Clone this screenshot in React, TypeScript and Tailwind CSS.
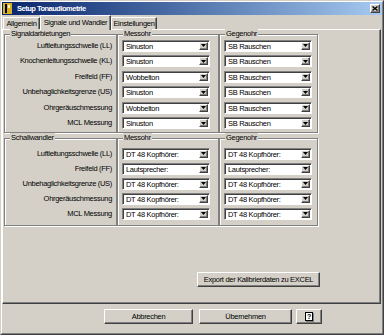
import React from "react";

const font = "font-['Liberation_Sans',Arial,sans-serif] text-[7.5px] tracking-[-0.3px] text-black";

const signalRows = [
  { label: "Luftleitungsschwelle (LL)", mess: "Sinuston", gegen: "SB Rauschen" },
  { label: "Knochenleitungsschwelle (KL)", mess: "Sinuston", gegen: "SB Rauschen" },
  { label: "Freifeld (FF)", mess: "Wobbelton", gegen: "SB Rauschen" },
  { label: "Unbehaglichkeitsgrenze (US)", mess: "Sinuston", gegen: "SB Rauschen" },
  { label: "Ohrgeräuschmessung", mess: "Wobbelton", gegen: "SB Rauschen" },
  { label: "MCL Messung", mess: "Sinuston", gegen: "SB Rauschen" },
];

const wandlerRows = [
  { label: "Luftleitungsschwelle (LL)", mess: "DT 48 Kopfhörer:", gegen: "DT 48 Kopfhörer:" },
  { label: "Freifeld (FF)", mess: "Lautsprecher:", gegen: "Lautsprecher:" },
  { label: "Unbehaglichkeitsgrenze (US)", mess: "DT 48 Kopfhörer:", gegen: "DT 48 Kopfhörer:" },
  { label: "Ohrgeräuschmessung", mess: "DT 48 Kopfhörer:", gegen: "DT 48 Kopfhörer:" },
  { label: "MCL Messung", mess: "DT 48 Kopfhörer:", gegen: "DT 48 Kopfhörer:" },
];

// first group has a slightly wider pitch
const pitchA = ["h-[15px]", "h-[16px]", "h-[15px]", "h-[16px]", "h-[15px]", "h-[16px]"];
const pitchB = ["h-[15px]", "h-[15px]", "h-[15px]", "h-[15px]", "h-[15px]"];

const raised =
  "border border-t-white border-l-white border-r-[#404040] border-b-[#404040] shadow-[inset_-1px_-1px_0_#808080]";

function Combo({ value }: { value: string }) {
  return (
    <div className="flex h-[12px] w-[88px] bg-white border border-t-[#808080] border-l-[#808080] border-r-white border-b-white shadow-[inset_1px_1px_0_#404040]">
      <span className="flex-1 pl-[3px] pt-[1px] leading-[9px] whitespace-nowrap overflow-hidden">{value}</span>
      <span className={`my-[1px] mr-[1px] flex w-[9px] items-center justify-center bg-[#d4d0c8] ${raised}`}>
        <svg width="5" height="3" viewBox="0 0 5 3">
          <path d="M0 0h5L2.5 3z" fill="#000" />
        </svg>
      </span>
    </div>
  );
}

function Box({
  title,
  className,
  children,
}: {
  title: string;
  className: string;
  children: React.ReactNode;
}) {
  return (
    <div className={`relative border border-[#808080] shadow-[inset_1px_1px_0_#fff,1px_1px_0_#fff] ${className}`}>
      <span className="absolute left-[5px] -top-[6px] bg-[#d4d0c8] px-[1px] leading-[10px] text-[#000]">
        {title}
      </span>
      {children}
    </div>
  );
}

function Group({
  title,
  rows,
  pitch,
  pad,
}: {
  title: string;
  rows: { label: string; mess: string; gegen: string }[];
  pitch: string[];
  pad: string;
}) {
  return (
    <div className="flex">
      <Box title={title} className={`w-[113px] ${pad}`}>
        {rows.map((r, i) => (
          <div key={i} className={`flex items-center justify-end pr-[4px] ${pitch[i]}`}>
            {r.label}
          </div>
        ))}
      </Box>
      <Box title="Messohr" className={`w-[102px] ${pad}`}>
        {rows.map((r, i) => (
          <div key={i} className={`flex items-center pl-[4px] ${pitch[i]}`}>
            <Combo value={r.mess} />
          </div>
        ))}
      </Box>
      <Box title="Gegenohr" className={`w-[99px] ${pad}`}>
        {rows.map((r, i) => (
          <div key={i} className={`flex items-center pl-[4px] ${pitch[i]}`}>
            <Combo value={r.gegen} />
          </div>
        ))}
      </Box>
    </div>
  );
}

function Tab({ label, active, w }: { label: string; active?: boolean; w: string }) {
  return active ? (
    <div
      className={`relative z-10 -mb-px flex h-[15px] items-center justify-center bg-[#d4d0c8] border-t border-l border-r border-t-white border-l-white border-r-[#404040] shadow-[inset_-1px_0_0_#808080] ${w}`}
    >
      {label}
    </div>
  ) : (
    <div
      className={`flex h-[12px] items-center justify-center border-t border-l border-r border-t-white border-l-white border-r-[#404040] shadow-[inset_-1px_0_0_#808080] ${w}`}
    >
      {label}
    </div>
  );
}

export default function App() {
  return (
    <div className={`h-[335px] w-[384px] bg-[#d4d0c8] ${font}`}>
      <div className="h-full w-full border border-t-[#d4d0c8] border-l-[#d4d0c8] border-r-[#404040] border-b-[#404040]">
        <div className="flex h-full w-full flex-col border border-t-white border-l-white border-r-[#808080] border-b-[#808080]">
          {/* title bar */}
          <div className="flex h-[13px] shrink-0 items-center bg-gradient-to-r from-[#0a246a] to-[#a6caf0] pl-[1px] pr-[2px]">
            <svg width="9" height="11" viewBox="0 0 9 11" className="mr-[5px]">
              <rect x="0" y="0" width="9" height="11" fill="#d8b020" />
              <rect x="2" y="1" width="2" height="9" fill="#000" />
              <rect x="5" y="2" width="2" height="3" fill="#fff6c0" />
            </svg>
            <span className="font-bold text-white tracking-[-0.5px]">Setup Tonaudiometrie</span>
            <span className={`ml-auto flex h-[9px] w-[10px] items-center justify-center bg-[#d4d0c8] ${raised}`}>
              <svg width="6" height="5" viewBox="0 0 6 5">
                <path d="M0.5 0.5L5.5 4.5M5.5 0.5L0.5 4.5" stroke="#000" strokeWidth="1.4" />
              </svg>
            </span>
          </div>

          {/* tabs */}
          <div className="flex h-[14px] shrink-0 items-end pl-[1px]">
            <Tab label="Allgemein" w="w-[37px]" />
            <Tab label="Signale und Wandler" active w="w-[71px]" />
            <Tab label="Einstellungen" w="w-[46px]" />
          </div>

          {/* tab page */}
          <div className="flex h-[275px] w-[379px] shrink-0 flex-col border border-t-white border-l-white border-r-[#404040] border-b-[#404040] shadow-[inset_-1px_-1px_0_#808080] pl-[1px] pt-[4px]">
            <Group title="Signaldarbietungen" rows={signalRows} pitch={pitchA} pad="pt-[3px] pb-[1px]" />
            <div className="mt-[5px]">
              <Group title="Schallwandler" rows={wandlerRows} pitch={pitchB} pad="pt-[7px] pb-[4px]" />
            </div>
            <div className="mt-[46px] pl-[193px]">
              <button className={`flex h-[15px] w-[123px] items-center justify-center bg-[#d4d0c8] ${raised}`}>
                Export der Kalibrierdaten zu EXCEL
              </button>
            </div>
          </div>

          {/* dialog buttons */}
          <div className="mt-[5px] flex pl-[102px]">
            <button className={`flex h-[15px] w-[89px] items-center justify-center bg-[#d4d0c8] ${raised}`}>
              Abbrechen
            </button>
            <button className={`ml-[6px] flex h-[15px] w-[93px] items-center justify-center bg-[#d4d0c8] ${raised}`}>
              Übernehmen
            </button>
            <button className={`ml-[4px] flex h-[15px] w-[26px] items-center justify-center bg-[#d4d0c8] ${raised}`}>
              <span className="flex h-[9px] w-[8px] items-center justify-center border border-black bg-white text-[7px] font-bold leading-none shadow-[1px_1px_0_#808080]">
                ?
              </span>
            </button>
          </div>
        </div>
      </div>
    </div>
  );
}
